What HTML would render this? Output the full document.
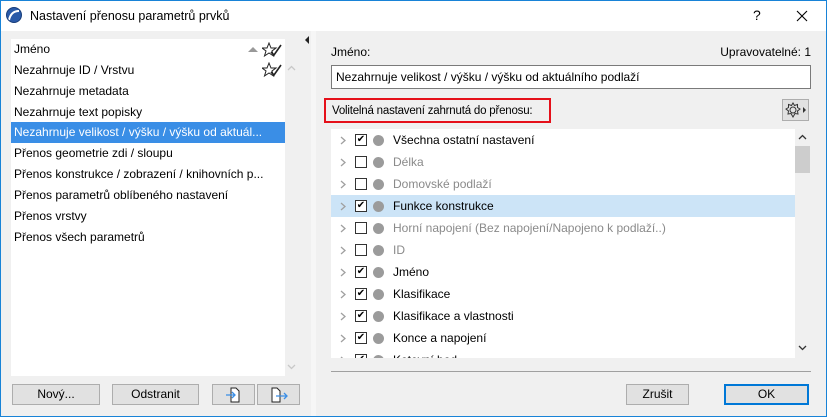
<!DOCTYPE html>
<html><head><meta charset="utf-8"><style>
*{margin:0;padding:0;box-sizing:border-box}
body{width:827px;height:417px;overflow:hidden;background:#f0f0f0;font-family:"Liberation Sans",sans-serif;font-size:12px;color:#000;position:relative}
.abs{position:absolute}
.win{position:absolute;left:0;top:0;width:827px;height:417px;border:1px solid #1883d7}
.title{left:1px;top:1px;width:825px;height:30px;background:#fff}
.row{position:absolute;left:0;width:274px;height:21px;line-height:21px;padding-left:3px;white-space:nowrap}
.btn{position:absolute;height:21px;background:#e1e1e1;border:1px solid #adadad;text-align:center;line-height:19px}
.tr{position:absolute;left:0;width:464px;height:22px;line-height:22px}
.tr .chev{position:absolute;left:9px;top:7px;width:6px;height:9px}
.tr .cb{position:absolute;left:24px;top:5px;width:12px;height:12px;border:1px solid #333;background:#fff;font-size:10px;line-height:10px;text-align:center;color:#000}
.tr .dot{position:absolute;left:42px;top:6px;width:11px;height:11px;border-radius:50%;background:#9b9b9b}
.tr .t{position:absolute;left:62px;top:0;white-space:nowrap}
.g{color:#8a8a8a}
</style></head><body>
<div class="win"></div>
<div class="abs title"></div>
<svg class="abs" style="left:6px;top:7px" width="16" height="16" viewBox="0 0 16 16"><circle cx="8" cy="8" r="7.5" fill="#2a5aa8"/><path d="M3 13 Q5 4 13 4" stroke="#fff" stroke-width="2" fill="none"/><circle cx="8" cy="8" r="7.5" fill="none" stroke="#173d7a"/></svg>
<div class="abs" style="left:30px;top:9px;font-size:12.5px">Nastavení přenosu parametrů prvků</div>
<div class="abs" style="left:753px;top:7px;font-size:14px">?</div>
<svg class="abs" style="left:796px;top:10px" width="12" height="12"><path d="M1 1L11 11M11 1L1 11" stroke="#000" stroke-width="1.1"/></svg>

<div class="abs" style="left:11px;top:39px;width:274px;height:337px;background:#fff"></div>
<div class="abs" style="left:285px;top:58px;width:12px;height:318px;background:#f0f0f0"></div>
<div class="abs" style="left:11px;top:39px;width:274px;height:337px">
<div class="row" style="top:0">Jméno</div>
<div class="row" style="top:21px">Nezahrnuje ID / Vrstvu</div>
<div class="row" style="top:42px">Nezahrnuje metadata</div>
<div class="row" style="top:63px">Nezahrnuje text popisky</div>
<div class="row" style="top:83px;background:#3a8ee6;color:#fff">Nezahrnuje velikost / výšku / výšku od aktuál...</div>
<div class="row" style="top:104px">Přenos geometrie zdi / sloupu</div>
<div class="row" style="top:125px">Přenos konstrukce / zobrazení / knihovních p...</div>
<div class="row" style="top:146px">Přenos parametrů oblíbeného nastavení</div>
<div class="row" style="top:167px">Přenos vrstvy</div>
<div class="row" style="top:188px">Přenos všech parametrů</div>
</div>
<div class="abs" style="left:248px;top:47px;width:0;height:0;border-left:5px solid transparent;border-right:5px solid transparent;border-bottom:5px solid #999"></div>
<svg class="abs" style="left:262px;top:42px" width="20" height="16" viewBox="0 0 20 16"><path d="M7 1L9 6L14 6L10 9L11.5 14L7 11L2.5 14L4 9L0 6L5 6Z" fill="none" stroke="#222"/><path d="M9 10L12 13L19 3" fill="none" stroke="#222" stroke-width="1.6"/></svg>
<svg class="abs" style="left:262px;top:62px" width="20" height="16" viewBox="0 0 20 16"><path d="M7 1L9 6L14 6L10 9L11.5 14L7 11L2.5 14L4 9L0 6L5 6Z" fill="none" stroke="#222"/><path d="M9 10L12 13L19 3" fill="none" stroke="#222" stroke-width="1.6"/></svg>
<svg class="abs" style="left:287px;top:65px" width="9" height="6"><path d="M1 5L4.5 1.5L8 5" stroke="#c8c8c8" fill="none" stroke-width="1.3"/></svg>
<svg class="abs" style="left:287px;top:364px" width="9" height="6"><path d="M1 1L4.5 4.5L8 1" stroke="#c8c8c8" fill="none" stroke-width="1.3"/></svg>

<div class="btn" style="left:12px;top:384px;width:88px">Nový...</div>
<div class="btn" style="left:112px;top:384px;width:87px">Odstranit</div>
<div class="btn" style="left:212px;top:384px;width:43px"><svg width="20" height="18" viewBox="0 0 20 18" style="margin-top:1px"><path d="M7 2H12L15 5V16H7Z" fill="#fff" stroke="#222"/><path d="M2 9H11M8 6L11 9L8 12" stroke="#3a8ee6" fill="none" stroke-width="1.3"/></svg></div>
<div class="btn" style="left:257px;top:384px;width:43px"><svg width="20" height="18" viewBox="0 0 20 18" style="margin-top:1px"><path d="M3 2H8L11 5V16H3Z" fill="#fff" stroke="#222"/><path d="M7 10H18M15 7L18 10L15 13" stroke="#3a8ee6" fill="none" stroke-width="1.3"/></svg></div>

<div class="abs" style="left:311px;top:31px;width:5px;height:385px;background:#f6f6f6"></div>
<div class="abs" style="left:305px;top:36px;width:0;height:0;border-top:4px solid transparent;border-bottom:4px solid transparent;border-right:4px solid #222"></div>

<div class="abs" style="left:331px;top:45px">Jméno:</div>
<div class="abs" style="right:16px;top:45px">Upravovatelné: 1</div>
<div class="abs" style="left:331px;top:65px;width:480px;height:24px;background:#fff;border:1px solid #7a7a7a;padding:4px 0 0 4px">Nezahrnuje velikost / výšku / výšku od aktuálního podlaží</div>
<div class="abs" style="left:324px;top:98px;width:227px;height:25px;border:2px solid #e5101a;padding:5px 0 0 6px;white-space:nowrap;font-size:11.5px;letter-spacing:-0.2px">Volitelná nastavení zahrnutá do přenosu:</div>
<div class="abs" style="left:782px;top:99px;width:27px;height:22px;border:1px solid #adadad;background:#e1e1e1"><svg width="25" height="20" viewBox="0 0 25 20"><circle cx="10" cy="10" r="3" fill="none" stroke="#333"/><path d="M10 3L11.5 5.5L14.5 4.5L14.5 7.5L17 9L14.5 11L15 14L12 13.5L10 17L8 13.5L5 14L5.5 11L3 9L5.5 7.5L5.5 4.5L8.5 5.5Z" fill="none" stroke="#333"/><path d="M20 7L23 10L20 13Z" fill="#333"/></svg></div>

<div class="abs" style="left:331px;top:129px;width:464px;height:229px;background:#fff;overflow:hidden">
<div class="tr" style="top:0"><svg class="chev"><path d="M1 1L5 4.5L1 8" stroke="#a0a0a0" fill="none" stroke-width="1.3"/></svg><span class="cb">✔</span><span class="dot"></span><span class="t">Všechna ostatní nastavení</span></div>
<div class="tr" style="top:22px"><svg class="chev"><path d="M1 1L5 4.5L1 8" stroke="#a0a0a0" fill="none" stroke-width="1.3"/></svg><span class="cb"></span><span class="dot"></span><span class="t g">Délka</span></div>
<div class="tr" style="top:44px"><svg class="chev"><path d="M1 1L5 4.5L1 8" stroke="#a0a0a0" fill="none" stroke-width="1.3"/></svg><span class="cb"></span><span class="dot"></span><span class="t g">Domovské podlaží</span></div>
<div class="tr" style="top:66px;background:#cce4f7"><svg class="chev"><path d="M1 1L5 4.5L1 8" stroke="#a0a0a0" fill="none" stroke-width="1.3"/></svg><span class="cb">✔</span><span class="dot"></span><span class="t">Funkce konstrukce</span></div>
<div class="tr" style="top:88px"><svg class="chev"><path d="M1 1L5 4.5L1 8" stroke="#a0a0a0" fill="none" stroke-width="1.3"/></svg><span class="cb"></span><span class="dot"></span><span class="t g">Horní napojení (Bez napojení/Napojeno k podlaží..)</span></div>
<div class="tr" style="top:110px"><svg class="chev"><path d="M1 1L5 4.5L1 8" stroke="#a0a0a0" fill="none" stroke-width="1.3"/></svg><span class="cb"></span><span class="dot"></span><span class="t g">ID</span></div>
<div class="tr" style="top:132px"><svg class="chev"><path d="M1 1L5 4.5L1 8" stroke="#a0a0a0" fill="none" stroke-width="1.3"/></svg><span class="cb">✔</span><span class="dot"></span><span class="t">Jméno</span></div>
<div class="tr" style="top:154px"><svg class="chev"><path d="M1 1L5 4.5L1 8" stroke="#a0a0a0" fill="none" stroke-width="1.3"/></svg><span class="cb">✔</span><span class="dot"></span><span class="t">Klasifikace</span></div>
<div class="tr" style="top:176px"><svg class="chev"><path d="M1 1L5 4.5L1 8" stroke="#a0a0a0" fill="none" stroke-width="1.3"/></svg><span class="cb">✔</span><span class="dot"></span><span class="t">Klasifikace a vlastnosti</span></div>
<div class="tr" style="top:198px"><svg class="chev"><path d="M1 1L5 4.5L1 8" stroke="#a0a0a0" fill="none" stroke-width="1.3"/></svg><span class="cb">✔</span><span class="dot"></span><span class="t">Konce a napojení</span></div>
<div class="tr" style="top:220px"><svg class="chev"><path d="M1 1L5 4.5L1 8" stroke="#a0a0a0" fill="none" stroke-width="1.3"/></svg><span class="cb">✔</span><span class="dot"></span><span class="t">Kotevní bod</span></div>
</div>
<div class="abs" style="left:795px;top:146px;width:15px;height:27px;background:#cdcdcd"></div>
<svg class="abs" style="left:798px;top:134px" width="9" height="6"><path d="M1 5L4.5 1.5L8 5" stroke="#333" fill="none" stroke-width="1.3"/></svg>
<svg class="abs" style="left:798px;top:345px" width="9" height="6"><path d="M1 1L4.5 4.5L8 1" stroke="#333" fill="none" stroke-width="1.3"/></svg>
<div class="abs" style="left:331px;top:371px;width:480px;height:1px;background:#a0a0a0"></div>

<div class="btn" style="left:626px;top:384px;width:63px">Zrušit</div>
<div class="btn" style="left:724px;top:384px;width:85px;border:2px solid #0078d7;line-height:17px">OK</div>
</body></html>
